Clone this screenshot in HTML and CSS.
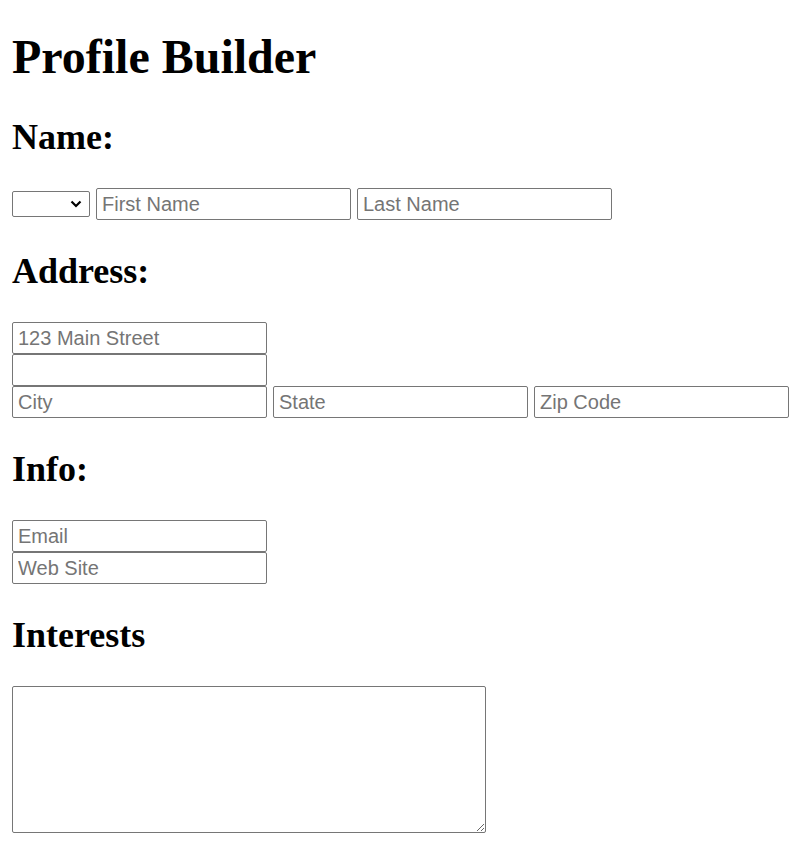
FILE: index.html
```html
<!DOCTYPE html>
<html lang="en">
<head>
<meta charset="utf-8">
<title>Profile Builder</title>
<link rel="stylesheet" href="styles.css">
</head>
<body class="page">
  <h1 class="title">Profile Builder</h1>

  <h2 class="section">Name:</h2>
  <div class="row pad-1">
    <span class="select-wrap">
      <select class="select" aria-label="Title">
        <option></option>
        <option>Mr.</option>
        <option>Ms.</option>
        <option>Dr.</option>
      </select>
      <svg class="chevron" width="12" height="8" viewBox="0 0 12 8" aria-hidden="true">
        <path d="M1.5 1.5 L6 6 L10.5 1.5" fill="none" stroke="#000" stroke-width="2.2"/>
      </svg>
    </span>
    <input class="field" type="text" placeholder="First Name">
    <input class="field" type="text" placeholder="Last Name">
  </div>

  <h2 class="section">Address:</h2>
  <div class="stack pad-1">
    <input class="field" type="text" placeholder="123 Main Street">
    <input class="field" type="text">
    <div class="row">
      <input class="field" type="text" placeholder="City">
      <input class="field" type="text" placeholder="State">
      <input class="field" type="text" placeholder="Zip Code">
    </div>
  </div>

  <h2 class="section">Info:</h2>
  <div class="stack pad-1">
    <input class="field" type="email" placeholder="Email">
    <input class="field" type="url" placeholder="Web Site">
  </div>

  <h2 class="section">Interests</h2>
  <textarea class="area"></textarea>
</body>
</html>
```

FILE: styles.css
```css
.page {
  margin: 0;
  padding: 12px;
  font-family: "Liberation Serif", "Times New Roman", serif;
  color: #000;
  background: #fff;
}

.title {
  font-size: 48px;
  font-weight: bold;
  line-height: 55px;
  margin: 17px 0 33px;
}

.section {
  font-size: 36px;
  font-weight: bold;
  line-height: 41px;
  margin: 30px 0;
}

.row {
  display: flex;
  align-items: center;
  gap: 6px;
}

.pad-1 {
  padding-bottom: 1px;
}

.stack {
  display: flex;
  flex-direction: column;
  align-items: flex-start;
}

.field {
  box-sizing: border-box;
  width: 255px;
  height: 32px;
  margin: 0;
  padding: 0 5px;
  border: 1px solid #767676;
  border-radius: 2px;
  font-family: "Liberation Sans", Arial, sans-serif;
  font-size: 20px;
  color: #000;
  background: #fff;
}

.field::placeholder {
  color: #757575;
}

.select-wrap {
  position: relative;
  display: block;
  width: 78px;
  height: 26px;
}

.select {
  box-sizing: border-box;
  display: block;
  width: 78px;
  height: 26px;
  margin: 0;
  padding: 0 4px;
  border: 1px solid #767676;
  border-radius: 2px;
  font-family: "Liberation Sans", Arial, sans-serif;
  font-size: 20px;
  color: #000;
  background: #fff;
  -webkit-appearance: none;
  appearance: none;
}

.chevron {
  position: absolute;
  left: 58px;
  top: 9px;
  pointer-events: none;
}

.area {
  display: block;
  box-sizing: border-box;
  width: 474px;
  height: 147px;
  margin: 0;
  border: 1px solid #767676;
  border-radius: 2px;
  font-family: "Liberation Mono", monospace;
  font-size: 20px;
}
```
